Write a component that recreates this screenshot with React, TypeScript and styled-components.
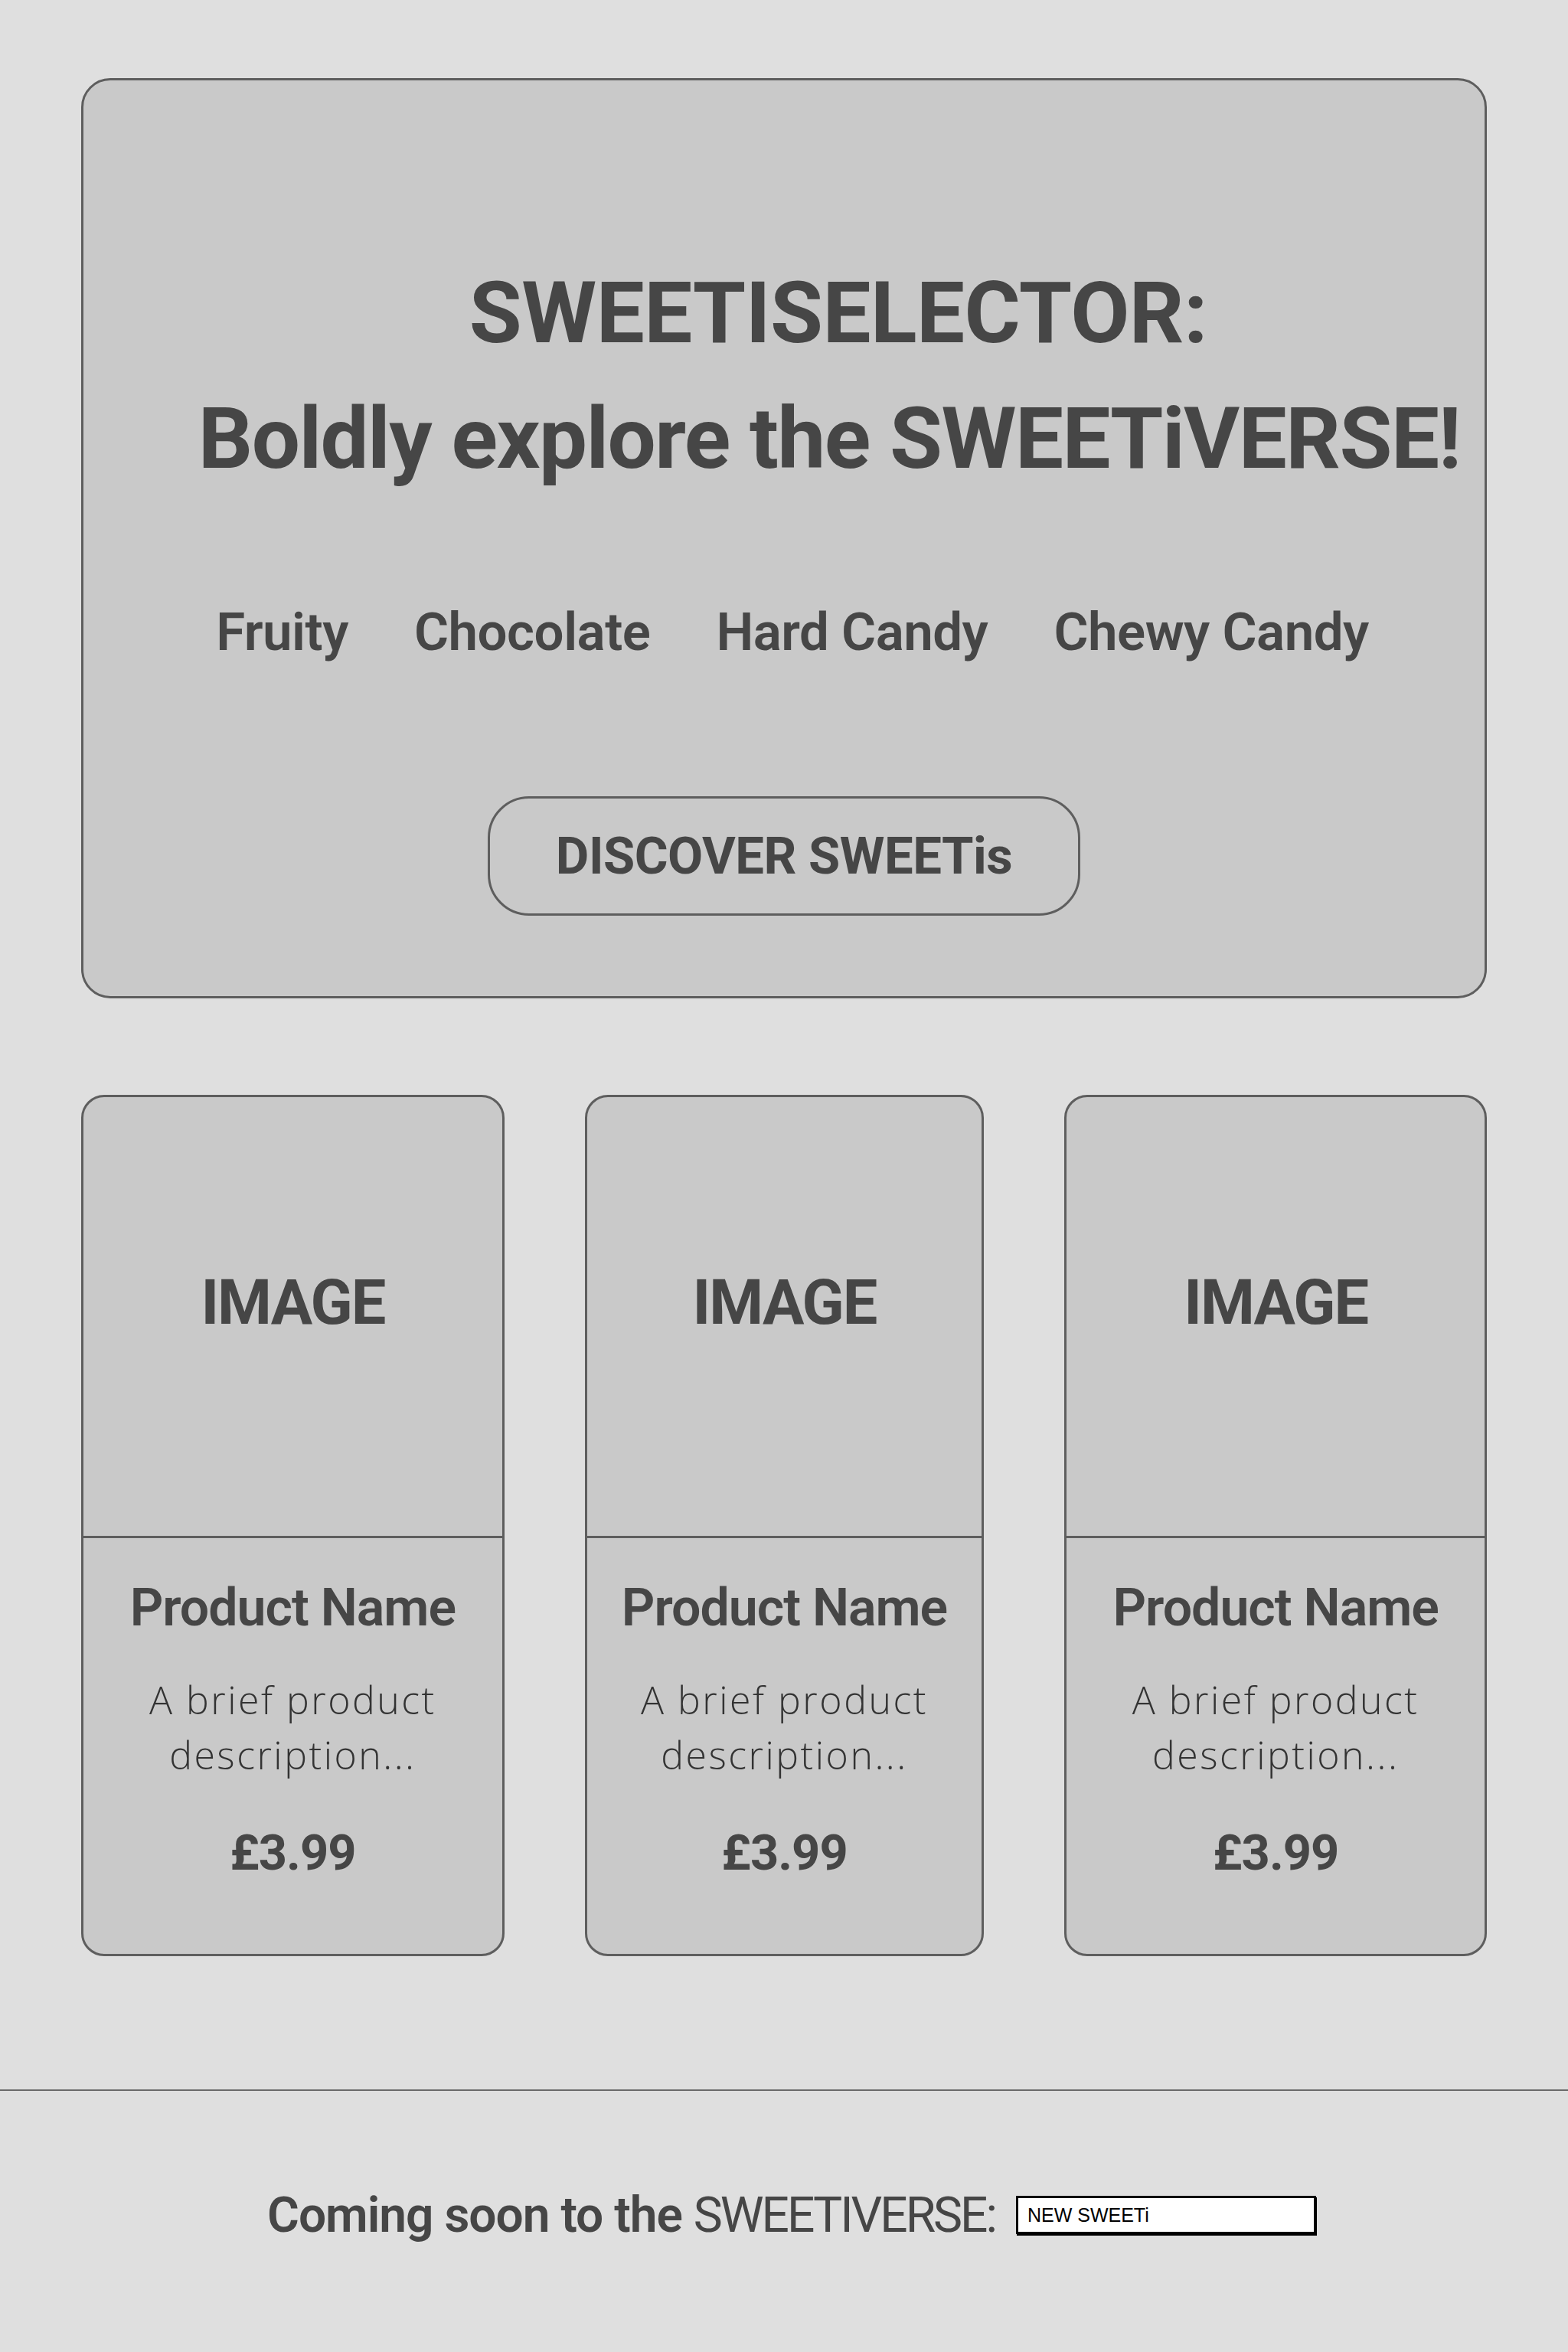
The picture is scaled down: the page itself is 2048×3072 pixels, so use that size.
import styled, { createGlobalStyle } from 'styled-components';

const GlobalStyle = createGlobalStyle`
    html, body {
        margin: 0;
        padding: 0;
        background: #dfdfdf;
    }
    * {
        box-sizing: border-box;
    }
    body {
        font-family: Roboto, "Liberation Sans", sans-serif;
        color: #464646;
    }
`;

const Page = styled.div`
    padding: 102px 106px 0;
`;

const Hero = styled.section`
    display: flex;
    flex-direction: column;
    align-items: center;
    background: #c9c9c9;
    border: 3px solid #5e5e5e;
    border-radius: 38px;
    padding: 222px 0 105px;
`;

const Heading = styled.h1`
    display: flex;
    flex-direction: column;
    align-items: center;
    margin: 0;
    padding-left: 118px;
    font-size: 112px;
    line-height: 164px;
    font-weight: 700;
    text-align: center;
    white-space: nowrap;
`;

const HeadingLine = styled.span<{ spacing: number; shift: number }>`
    display: block;
    letter-spacing: ${({ spacing }) => spacing}px;
    margin-left: ${({ shift }) => shift}px;
`;

const Categories = styled.nav`
    display: flex;
    gap: 86px;
    margin-top: 138px;
    padding-left: 22px;
`;

const Category = styled.span`
    font-size: 69px;
    line-height: 66px;
    font-weight: 600;
    letter-spacing: -0.5px;
`;

const DiscoverButton = styled.button`
    margin-top: 181px;
    width: 774px;
    height: 156px;
    border: 3px solid #5e5e5e;
    border-radius: 54px;
    background: transparent;
    color: #464646;
    font-family: inherit;
    font-size: 67px;
    font-weight: 700;
    letter-spacing: -0.5px;
`;

const Products = styled.div`
    display: grid;
    grid-template-columns: 553fr 522fr 552fr;
    column-gap: 105px;
    margin-top: 126px;
`;

const Card = styled.article`
    display: flex;
    flex-direction: column;
    height: 1125px;
    background: #c9c9c9;
    border: 3px solid #5e5e5e;
    border-radius: 30px;
    overflow: hidden;
`;

const ImageArea = styled.div`
    display: flex;
    align-items: center;
    justify-content: center;
    height: 576px;
    padding-bottom: 36px;
    border-bottom: 3px solid #5e5e5e;
    font-size: 81px;
    font-weight: 700;
    letter-spacing: -2px;
`;

const Info = styled.div`
    display: flex;
    flex-direction: column;
    align-items: center;
    padding-top: 49px;
    text-align: center;
`;

const Name = styled.h2`
    margin: 0;
    font-size: 68px;
    line-height: 84px;
    font-weight: 600;
    letter-spacing: -1px;
`;

const Description = styled.p`
    margin: 42px 0 0;
    font-family: "Open Sans", sans-serif;
    font-size: 50px;
    line-height: 72px;
    font-weight: 300;
    letter-spacing: 2.5px;
    color: #333;
`;

const Price = styled.div`
    margin-top: 53px;
    font-size: 65px;
    line-height: 78px;
    font-weight: 700;
    letter-spacing: -1px;
`;

const Footer = styled.footer`
    display: flex;
    align-items: center;
    justify-content: center;
    gap: 27px;
    height: 342px;
    margin-top: 174px;
    padding: 0 0 16px 20px;
    border-top: 2px solid #6a6a6a;
`;

const Teaser = styled.span`
    font-size: 64px;
    font-weight: 600;
    letter-spacing: -1px;
`;

const Thin = styled.span`
    font-weight: 400;
    letter-spacing: -3px;
`;

const NewInput = styled.input`
    width: 392px;
    height: 50px;
    padding: 0 12px;
    border: 3px solid #000;
    box-shadow: 1px 2px 0 #000;
    background: #fff;
    color: #000;
    font-family: "Liberation Sans", sans-serif;
    font-size: 25px;
    outline: none;
`;

const categories = ['Fruity', 'Chocolate', 'Hard Candy', 'Chewy Candy'];

const ProductCard = () => (
    <Card>
        <ImageArea>IMAGE</ImageArea>
        <Info>
            <Name>Product Name</Name>
            <Description>
                A brief product
                <br />
                description...
            </Description>
            <Price>£3.99</Price>
        </Info>
    </Card>
);

const App = () => {
    return (
        <>
            <GlobalStyle />
            <Page>
                <Hero>
                    <Heading>
                        <HeadingLine spacing={-0.5} shift={24}>
                            SWEETISELECTOR:
                        </HeadingLine>
                        <HeadingLine spacing={-1.5} shift={0}>
                            Boldly explore the SWEETiVERSE!
                        </HeadingLine>
                    </Heading>
                    <Categories>
                        {categories.map((c) => (
                            <Category key={c}>{c}</Category>
                        ))}
                    </Categories>
                    <DiscoverButton>DISCOVER SWEETis</DiscoverButton>
                </Hero>
                <Products>
                    <ProductCard />
                    <ProductCard />
                    <ProductCard />
                </Products>
            </Page>
            <Footer>
                <Teaser>
                    Coming soon to the <Thin>SWEETIVERSE:</Thin>
                </Teaser>
                <NewInput defaultValue="NEW SWEETi" />
            </Footer>
        </>
    );
};

export default App;
